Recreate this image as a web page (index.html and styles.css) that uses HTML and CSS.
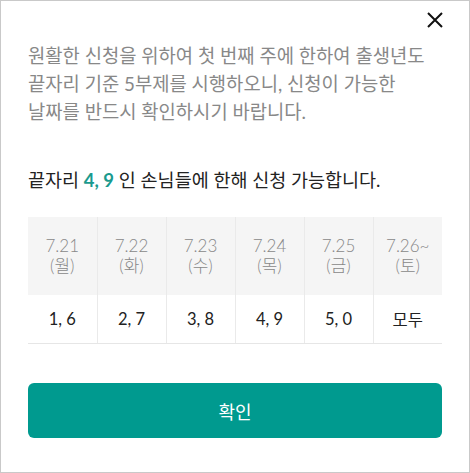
FILE: index.html
```html
<!DOCTYPE html>
<html lang="ko">
<head>
<meta charset="utf-8">
<title>신청 안내</title>
<link rel="stylesheet" href="styles.css">
</head>
<body>
<div class="modal">
	<div class="top">
		<button class="close" type="button" aria-label="닫기">
			<svg width="16" height="16" viewBox="0 0 16 16"><path d="M1 1L15 15M15 1L1 15" stroke="#111" stroke-width="2" fill="none"/></svg>
		</button>
	</div>
	<p class="notice">원활한 신청을 위하여 첫 번째 주에 한하여 출생년도 끝자리 기준 5부제를 시행하오니, 신청이 가능한 날짜를 반드시 확인하시기 바랍니다.</p>
	<h2 class="today">끝자리 <b>4, 9</b> 인 손님들에 한해 신청 가능합니다.</h2>
	<table class="days">
		<tr class="head">
			<td>7.21<br>(월)</td>
			<td>7.22<br>(화)</td>
			<td>7.23<br>(수)</td>
			<td>7.24<br>(목)</td>
			<td>7.25<br>(금)</td>
			<td>7.26~<br>(토)</td>
		</tr>
		<tr class="nums">
			<td>1, 6</td>
			<td>2, 7</td>
			<td>3, 8</td>
			<td>4, 9</td>
			<td>5, 0</td>
			<td>모두</td>
		</tr>
	</table>
	<button class="ok" type="button">확인</button>
</div>
</body>
</html>
```

FILE: styles.css
```css
body {
	margin: 0;
	background: #fff;
	font-family: Lato, "Noto Sans CJK KR", sans-serif;
}
.modal {
	box-sizing: border-box;
	width: 470px;
	height: 473px;
	border: 1px solid #c9c9c9;
	padding: 0 27px;
}
.top {
	display: flex;
	justify-content: flex-end;
	padding-top: 11px;
}
.close {
	margin: 0 -1px 0 0;
	padding: 0;
	border: none;
	background: none;
	width: 16px;
	height: 16px;
	display: flex;
}
.notice {
	margin: 14px 0 0;
	font-size: 18.8px;
	line-height: 28px;
	color: #888;
	word-break: keep-all;
}
.today {
	margin: 40px 0 0;
	font-size: 18.5px;
	font-weight: normal;
	line-height: 28px;
	color: #222;
}
.today b {
	color: #1a9a8e;
	font-weight: bold;
}
.days {
	margin-top: 23px;
	width: 414px;
	border-collapse: collapse;
	table-layout: fixed;
	text-align: center;
}
.days td {
	padding: 0;
	border-left: 1px solid #eaeaea;
}
.days td:first-child {
	border-left: none;
}
.head td {
	height: 78px;
	background: #f5f5f5;
	color: #888;
	font-size: 17px;
	font-weight: 300;
	line-height: 20px;
}
.nums td {
	height: 48px;
	border-bottom: 1px solid #e6e6e6;
	color: #222;
	font-size: 16.5px;
}
.ok {
	display: block;
	width: 414px;
	height: 55px;
	margin-top: 39px;
	border: none;
	border-radius: 6px;
	background: #009a8f;
	color: #fff;
	font-family: Lato, "Noto Sans CJK KR", sans-serif;
	font-size: 18px;
}
```
